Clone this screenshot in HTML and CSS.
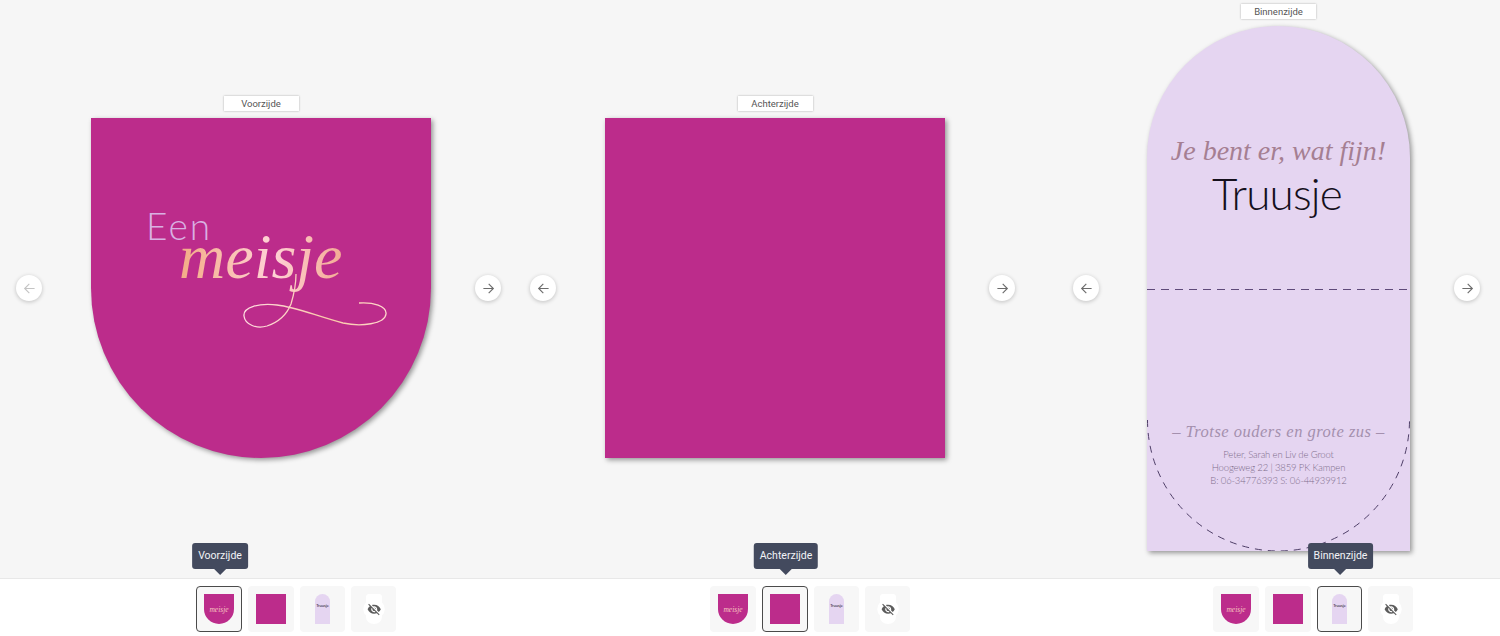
FILE: index.html
```html
<!DOCTYPE html>
<html lang="nl">
  <head>
    <meta charset="utf-8" />
    <meta name="viewport" content="width=device-width, initial-scale=1" />
    <title>Geboortekaartje</title>
    <link rel="stylesheet" href="styles.css">
  </head>

  <body>
    <svg class="defs" width="0" height="0">
      <defs>
        <linearGradient id="swash" x1="0" x2="1" y1="0" y2="0">
          <stop offset="0" stop-color="#ffdbe0" />
          <stop offset="0.6" stop-color="#f9c8a8" />
          <stop offset="1" stop-color="#ffd8cc" />
        </linearGradient>
        <symbol id="arrow-left" viewBox="0 0 14 14">
          <path d="M12.5 7H1.8M6.8 2 1.8 7l5 5" fill="none" stroke="currentColor" stroke-width="1.2" />
        </symbol>
        <symbol id="arrow-right" viewBox="0 0 14 14">
          <path d="M1.5 7h10.7M7.2 2l5 5-5 5" fill="none" stroke="currentColor" stroke-width="1.2" />
        </symbol>
        <symbol id="hidden-side" viewBox="0 0 30 32">
          <path d="M10 1h10a3 3 0 0 1 3 3v5.500a9 9 0 0 1 0 13V24a8 7 0 0 1-16 0v-1.500a9 9 0 0 1 0-13V4a3 3 0 0 1 3-3z" fill="#fff" />
          <g transform="translate(8 9) scale(.6)">
            <path fill="#5c5c5c" d="M12 7c2.76 0 5 2.24 5 5 0 .65-.13 1.26-.36 1.83l2.92 2.92c1.51-1.26 2.7-2.89 3.43-4.75-1.73-4.39-6-7.5-11-7.5-1.4 0-2.74.25-3.98.7l2.16 2.16C10.74 7.13 11.35 7 12 7zM2 4.27l2.28 2.28.46.46C3.08 8.3 1.78 10.02 1 12c1.73 4.39 6 7.5 11 7.5 1.55 0 3.03-.3 4.38-.84l.42.42L19.73 22 21 20.73 3.27 3 2 4.27zM7.53 9.8l1.55 1.55c-.05.21-.08.43-.08.65 0 1.66 1.34 3 3 3 .22 0 .44-.03.65-.08l1.55 1.55c-.67.33-1.41.53-2.2.53-2.76 0-5-2.24-5-5 0-.79.2-1.53.53-2.2zm4.31-.78l3.15 3.15.02-.16c0-1.66-1.34-3-3-3l-.17.01z" />
          </g>
        </symbol>
      </defs>
    </svg>

    <div class="editor">
      <!-- voorzijde -->
      <section class="panel">
        <div class="stage">
          <a class="nav nav_disabled" href="#"><svg><use href="#arrow-left" /></svg></a>
          <div class="side">
            <div class="side__label">Voorzijde</div>
            <div class="card card_front">
              <div class="front__een">Een</div>
              <div class="front__meisje">meisje</div>
              <svg class="card__art" viewBox="0 0 340 340">
                <path d="M268 185C282 184 296 188 295 196 294 206 270 209 252 205 225 198 205 189 186 187 168 185 152 189 153 198 154 207 166 211 176 208 188 204 196 196 200 186 203 176 205 166 205 156" fill="none" stroke="url(#swash)" stroke-width="1.3" />
              </svg>
            </div>
          </div>
          <a class="nav" href="#"><svg><use href="#arrow-right" /></svg></a>
        </div>
        <div class="strip">
          <div class="thumb thumb_active">
            <div class="tooltip">Voorzijde</div>
            <div class="mini mini_front"><span class="mini__meisje">meisje</span></div>
          </div>
          <div class="thumb"><div class="mini mini_back"></div></div>
          <div class="thumb thumb_narrow"><div class="mini mini_inner"><span class="mini__name">Truusje</span></div></div>
          <div class="thumb thumb_narrow"><svg class="mini mini_hidden"><use href="#hidden-side" /></svg></div>
        </div>
      </section>

      <!-- achterzijde -->
      <section class="panel">
        <div class="stage">
          <a class="nav" href="#"><svg><use href="#arrow-left" /></svg></a>
          <div class="side">
            <div class="side__label">Achterzijde</div>
            <div class="card card_back"></div>
          </div>
          <a class="nav" href="#"><svg><use href="#arrow-right" /></svg></a>
        </div>
        <div class="strip">
          <div class="thumb">
            <div class="mini mini_front"><span class="mini__meisje">meisje</span></div>
          </div>
          <div class="thumb thumb_active">
            <div class="tooltip">Achterzijde</div>
            <div class="mini mini_back"></div>
          </div>
          <div class="thumb thumb_narrow"><div class="mini mini_inner"><span class="mini__name">Truusje</span></div></div>
          <div class="thumb thumb_narrow"><svg class="mini mini_hidden"><use href="#hidden-side" /></svg></div>
        </div>
      </section>

      <!-- binnenzijde -->
      <section class="panel panel_inner">
        <div class="stage">
          <a class="nav" href="#"><svg><use href="#arrow-left" /></svg></a>
          <div class="side">
            <div class="side__label">Binnenzijde</div>
            <div class="card card_inner">
              <div class="inner__welcome">Je bent er, wat fijn!</div>
              <div class="inner__name">Truusje</div>
              <div class="inner__proud">– Trotse ouders en grote zus –</div>
              <div class="inner__address">
                <div>Peter, Sarah en Liv de Groot</div>
                <div>Hoogeweg 22 | 3859 PK Kampen</div>
                <div>B: 06-34776393 S: 06-44939912</div>
              </div>
              <svg class="card__art" viewBox="0 0 263 525">
                <path class="fold" d="M0 263.500H263" />
                <path class="fold fold_round" d="M.5 394A131 131 0 0 0 262.500 394" />
              </svg>
            </div>
          </div>
          <a class="nav" href="#"><svg><use href="#arrow-right" /></svg></a>
        </div>
        <div class="strip">
          <div class="thumb">
            <div class="mini mini_front"><span class="mini__meisje">meisje</span></div>
          </div>
          <div class="thumb"><div class="mini mini_back"></div></div>
          <div class="thumb thumb_narrow thumb_active">
            <div class="tooltip">Binnenzijde</div>
            <div class="mini mini_inner"><span class="mini__name">Truusje</span></div>
          </div>
          <div class="thumb thumb_narrow"><svg class="mini mini_hidden"><use href="#hidden-side" /></svg></div>
        </div>
      </section>
    </div>
  </body>
</html>
```

FILE: styles.css
```css
body {
  margin: 0;
  font-family: Roboto, "Liberation Sans", sans-serif;
  background: #f6f6f6;
}

.defs {
  position: absolute;
}

.editor {
  display: grid;
  grid-template-columns: 514px 514px 472px;
  height: 636px;
  overflow: hidden;
}

.panel {
  display: flex;
  flex-direction: column;
}

.stage {
  display: flex;
  align-items: center;
  justify-content: space-between;
  box-sizing: border-box;
  height: 578px;
  padding: 0 13px 2px 16px;
}

.panel_inner .stage {
  padding: 0 20px 2px 45px;
}

.nav {
  display: flex;
  align-items: center;
  justify-content: center;
  flex: 0 0 26px;
  height: 26px;
  border-radius: 50%;
  color: #6c6c6c;
  background: #fff;
  box-shadow: 0 1px 4px rgba(0, 0, 0, 0.22);
}

.nav svg {
  width: 13px;
  height: 13px;
}

.nav_disabled {
  color: #c4c4c4;
}

.side {
  display: flex;
  flex-direction: column;
  align-items: center;
  margin-left: 5px;
  padding-bottom: 22px;
}

.panel_inner .side {
  margin-left: 4px;
}

.side__label {
  width: 75px;
  height: 15px;
  margin-bottom: 7px;
  color: #555;
  font-size: 9.5px;
  line-height: 15px;
  text-align: center;
  background: #fff;
  box-shadow: 0 0 2px rgba(0, 0, 0, 0.3);
}

.card {
  position: relative;
  box-shadow: 2px 2px 5px rgba(0, 0, 0, 0.4);
}

.card__art {
  position: absolute;
  top: 0;
  left: 0;
  width: 100%;
  height: 100%;
}

.card_front,
.card_back {
  box-sizing: border-box;
  width: 340px;
  height: 340px;
  background: #bc2c8b;
}

.card_front {
  padding: 85px 0 0 55px;
  border-radius: 0 0 170px 170px;
}

.front__een {
  color: #d9b0e2;
  font-family: Lato, sans-serif;
  font-size: 37px;
  font-weight: 300;
  letter-spacing: 2px;
  line-height: 46px;
}

.front__meisje {
  width: 170px;
  margin: -27px 0 0 33px;
  font-family: "Liberation Serif", serif;
  font-size: 64px;
  font-style: italic;
  line-height: 70px;
  background: linear-gradient(90deg, #f3ab85, #ffd2d6 55%, #f2a78e);
  -webkit-background-clip: text;
  background-clip: text;
  color: transparent;
}

.card_inner {
  display: flex;
  flex-direction: column;
  align-items: center;
  box-sizing: border-box;
  width: 263px;
  height: 525px;
  padding: 103px 0 64px;
  border-radius: 131.5px 131.5px 0 0;
  background: #e5d5f1;
}

.inner__welcome {
  color: #a57f92;
  font-family: "Liberation Serif", serif;
  font-size: 28px;
  font-style: italic;
  line-height: 44px;
  white-space: nowrap;
}

.inner__name {
  margin: -7px 3px 0 0;
  color: #15101c;
  font-family: Lato, sans-serif;
  font-size: 44px;
  font-weight: 300;
  letter-spacing: -0.8px;
  line-height: 54px;
}

.inner__proud {
  margin-top: auto;
  color: #a490ae;
  font-family: "Liberation Serif", serif;
  font-size: 16.5px;
  font-style: italic;
  letter-spacing: 0.5px;
  line-height: 22px;
  white-space: nowrap;
}

.inner__address {
  margin-top: 5px;
  color: #7f6e8c;
  font-family: Lato, sans-serif;
  font-size: 9.5px;
  font-weight: 300;
  letter-spacing: -0.15px;
  line-height: 13px;
  text-align: center;
}

.fold {
  fill: none;
  stroke: #5f4a7a;
  stroke-width: 1;
  stroke-dasharray: 8 6;
}

.fold_round {
  stroke: #4f3f68;
  stroke-dasharray: 7 6;
}

.strip {
  display: flex;
  gap: 6px;
  flex: 1;
  box-sizing: border-box;
  padding: 7px 0 0 196px;
  border-top: 1px solid #e8e8e8;
  background: #fff;
}

.panel_inner .strip {
  padding-left: 185px;
}

.thumb {
  position: relative;
  display: flex;
  align-items: center;
  justify-content: center;
  box-sizing: border-box;
  width: 46px;
  height: 46px;
  border-radius: 4px;
  background: #f7f7f7;
}

.thumb_narrow {
  width: 45px;
}

.thumb_active {
  border: 1px solid #4a4a4a;
}

.tooltip {
  position: absolute;
  bottom: calc(100% + 18px);
  left: 50%;
  margin-left: 1px;
  padding: 0 6px;
  color: #f2f3f6;
  font-size: 10.5px;
  line-height: 26px;
  white-space: nowrap;
  border-radius: 3px;
  background: #434a5e;
  transform: translateX(-50%);
}

.tooltip::after {
  content: "";
  position: absolute;
  top: 100%;
  left: 50%;
  margin-left: -6px;
  border: 6px solid transparent;
  border-top-color: #434a5e;
  border-bottom: 0;
}

.mini {
  display: flex;
  align-items: center;
  justify-content: center;
  width: 30px;
  height: 30px;
  overflow: hidden;
}

.mini_front,
.mini_back {
  background: #bc2c8b;
}

.mini_front {
  border-radius: 0 0 15px 15px;
}

.mini_inner {
  width: 15px;
  border-radius: 7.5px 7.5px 0 0;
  background: #e5d5f1;
}

.mini_hidden {
  height: 32px;
}

.mini__meisje {
  color: #f6c6c0;
  font-family: "Liberation Serif", serif;
  font-size: 7.5px;
  font-style: italic;
}

.mini__name {
  margin-bottom: 8px;
  color: #15101c;
  font-family: Lato, sans-serif;
  font-size: 4px;
}
```
